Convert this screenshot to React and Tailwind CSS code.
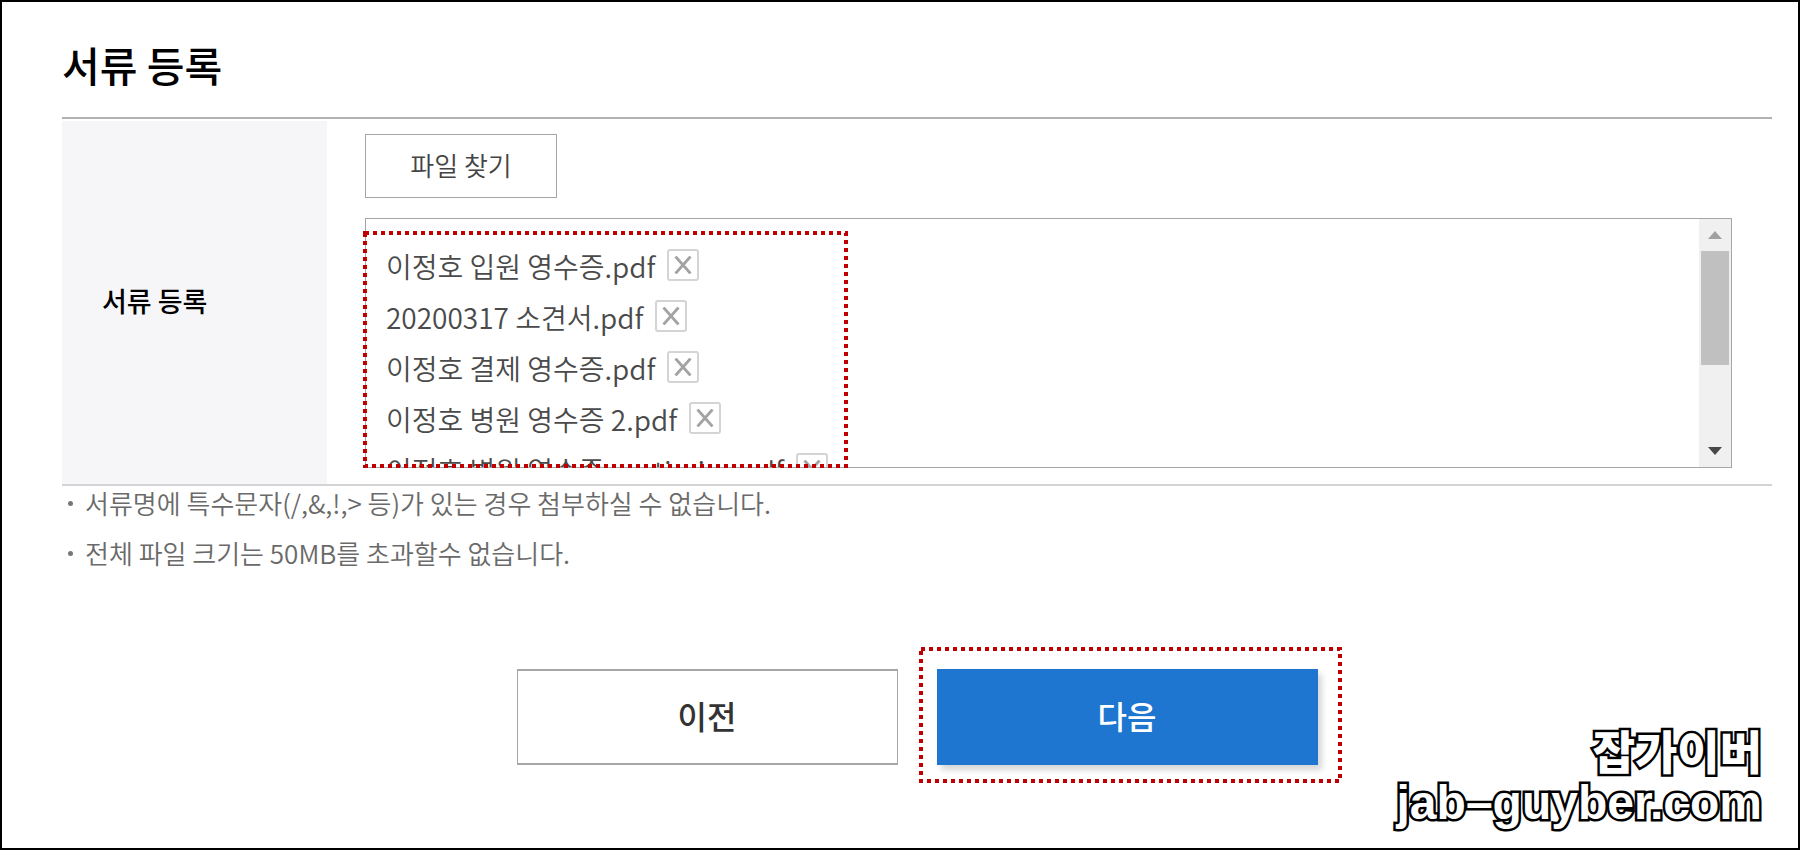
const files = [
  "이정호 입원 영수증.pdf",
  "20200317 소견서.pdf",
  "이정호 결제 영수증.pdf",
  "이정호 병원 영수증 2.pdf",
  "이정호 병원 영수증_optimize.pdf",
];

const notes = [
  "서류명에 특수문자(/,&,!,> 등)가 있는 경우 첨부하실 수 없습니다.",
  "전체 파일 크기는 50MB를 초과할수 없습니다.",
];

function Highlight({ className }) {
  return (
    <svg aria-hidden="true" className={`pointer-events-none absolute overflow-visible ${className}`}>
      <rect width="100%" height="100%" fill="none" stroke="#c00000" strokeWidth="4" strokeDasharray="4 4" />
    </svg>
  );
}

function Scrollbar() {
  return (
    <div className="flex w-8 shrink-0 flex-col items-center bg-[#f0f0f0]">
      <button type="button" aria-label="위로" className="flex h-8 w-full items-center justify-center">
        <svg width="14" height="8" viewBox="0 0 14 8"><path d="M0 8 7 0l7 8z" fill="#a0a0a0" /></svg>
      </button>
      <div className="h-[114px] w-7 bg-[#c0c0c0]" />
      <button type="button" aria-label="아래로" className="mt-auto flex h-8 w-full items-center justify-center">
        <svg width="14" height="8" viewBox="0 0 14 8"><path d="M0 0h14L7 8z" fill="#484848" /></svg>
      </button>
    </div>
  );
}

export default function App() {
  return (
    <div className="relative min-h-screen border-2 border-black bg-white pr-[26px] pl-[60px] font-['Noto_Sans_CJK_KR',sans-serif]">
      <main>
        <h1 className="pt-8 pb-[23px] text-[41px] leading-[60px] font-medium text-black">서류 등록</h1>

        <section className="flex border-t-2 border-b-2 border-t-[#b2b2b2] border-b-[#d4d4d4] pt-[2px]">
          <div className="flex w-[265px] shrink-0 items-center bg-[#f6f6f9] px-10">
            <label htmlFor="find-file" className="pb-1 text-[27px] leading-10 font-medium text-black">서류 등록</label>
          </div>
          <div className="min-w-0 flex-1 pt-[13px] pr-10 pb-4 pl-[38px]">
            <button id="find-file" type="button" className="block h-16 w-[192px] border border-[#a6a6a6] pb-1 text-[26px] font-[350] text-[#444]">
              파일 찾기
            </button>
            <div className="relative mt-5 flex h-[250px] border border-[#a6a6a6]">
              <ul className="min-w-0 flex-1 overflow-hidden pt-[22px] pl-5">
                {files.map((name) => (
                  <li key={name} className="flex h-[51px] items-center gap-3 text-[28px] leading-[51px] font-[350] text-[#4a4a4a]">
                    <span>{name}</span>
                    <button type="button" aria-label={`${name} 삭제`} className="mb-1 flex size-8 items-center justify-center rounded-[3px] border-2 border-[#d4d4d4]">
                      <svg width="18" height="18" viewBox="0 0 18 18">
                        <path d="M1.5 0.5 16.5 17.5M16.5 0.5 1.5 17.5" fill="none" stroke="#a3a3a3" strokeWidth="2.8" />
                      </svg>
                    </button>
                  </li>
                ))}
              </ul>
              <Scrollbar />
              <Highlight className="top-[14px] -left-px h-[233px] w-[481px]" />
            </div>
          </div>
        </section>

        <ul className="flex flex-col gap-4 text-[26px] leading-[34px] font-[350] text-[#6a6a6a]">
          {notes.map((note) => (
            <li key={note} className="flex items-center gap-3 pl-[6px]">
              <span className="size-[5px] rounded-full bg-[#777]" />
              {note}
            </li>
          ))}
        </ul>

        <div className="mt-[99px] flex justify-center gap-[39px]">
          <button type="button" className="h-24 w-[381px] border-x border-y-2 border-[#a6a6a6] pb-1 text-[32px] font-medium text-[#333]">이전</button>
          <div className="relative">
            <button type="button" className="h-24 w-[381px] bg-[#1e76d0] pb-1 text-[32px] font-medium text-white shadow-[4px_5px_6px_rgba(0,0,0,0.16)]">다음</button>
            <Highlight className="-top-5 -left-4 h-[132px] w-[419px]" />
          </div>
        </div>
      </main>

      <footer className="absolute right-9 bottom-5 text-right text-[46px] leading-[50px] text-white [paint-order:stroke_fill] [stroke-linejoin:round] [-webkit-text-stroke:5px_black]">
        <p className="mb-1 font-black">잡가이버</p>
        <p className="font-['Liberation_Sans',sans-serif] text-[48px] font-bold">jab–guyber.com</p>
      </footer>
    </div>
  );
}
